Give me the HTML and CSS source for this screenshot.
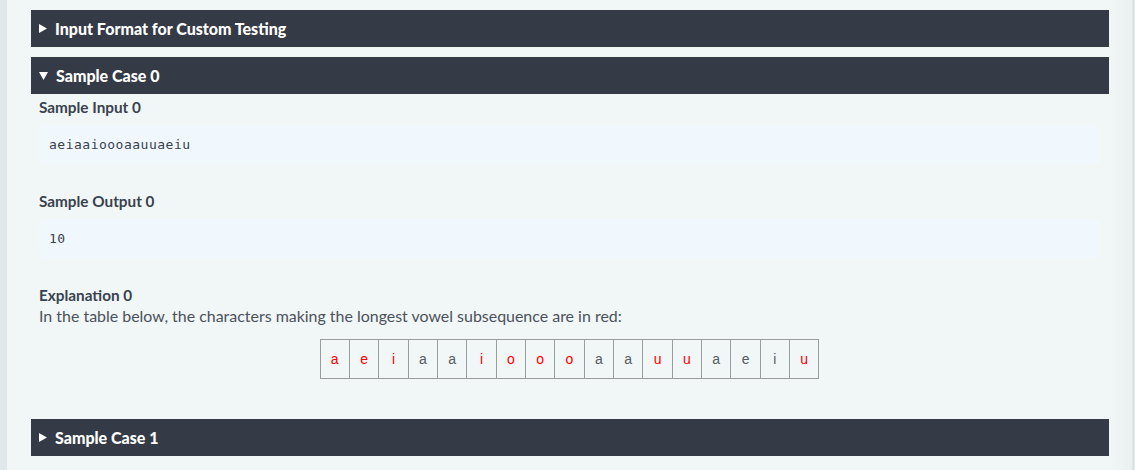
FILE: index.html
```html
<!DOCTYPE html>
<html>
<head>
<meta charset="utf-8">
<link rel="stylesheet" href="styles.css">
</head>
<body>
<div class="page">
  <div class="left-strip"></div>
  <main class="main">
    <section class="section">
      <div class="bar"><svg class="arrow" width="8" height="9" viewBox="0 0 8 9"><path d="M0 0 L8 4.5 L0 9 Z" fill="#fff"/></svg>Input Format for Custom Testing</div>
    </section>
    <section class="section">
      <div class="bar"><svg class="arrow" width="9" height="8" viewBox="0 0 9 8"><path d="M0 0 L9 0 L4.5 8 Z" fill="#fff"/></svg>Sample Case 0</div>
      <div class="content">
        <h4 class="label">Sample Input 0</h4>
        <pre class="code">aeiaaioooaauuaeiu</pre>
        <h4 class="label">Sample Output 0</h4>
        <pre class="code">10</pre>
        <h4 class="label label-expl">Explanation 0</h4>
        <p class="text">In the table below, the characters making the longest vowel subsequence are in red:</p>
        <div class="table-wrap">
          <table class="chars">
            <tr>
              <td class="r">a</td><td class="r">e</td><td class="r">i</td><td>a</td><td>a</td><td class="r">i</td><td class="r">o</td><td class="r">o</td><td class="r">o</td><td>a</td><td>a</td><td class="r">u</td><td class="r">u</td><td>a</td><td>e</td><td>i</td><td class="r">u</td>
            </tr>
          </table>
        </div>
      </div>
    </section>
    <section class="section">
      <div class="bar"><svg class="arrow" width="8" height="9" viewBox="0 0 8 9"><path d="M0 0 L8 4.5 L0 9 Z" fill="#fff"/></svg>Sample Case 1</div>
    </section>
  </main>
  <div class="right-strip"></div>
</div>
</body>
</html>
```
FILE: styles.css
```css
html, body {
  margin: 0;
  padding: 0;
  background: #f1f6f6;
}
body {
  font-family: Lato, "Noto Sans", sans-serif;
  color: #39424e;
}
.page {
  display: flex;
  width: 1135px;
  height: 470px;
  overflow: hidden;
}
.left-strip {
  width: 7px;
  flex: none;
  background: #e0e8ea;
}
.main {
  flex: 1;
  padding: 10px 0 0 24px;
  min-width: 0;
}
.right-strip {
  width: 26px;
  flex: none;
  background: linear-gradient(to right, #f1f6f6 0%, #eaf0f0 88%, #d8dfe1 92%, #d8dfe1 96%, #f1f6f6 100%);
}
.section {
  margin-bottom: 10px;
}
.bar {
  height: 37px;
  background: #343a46;
  color: #fff;
  font-weight: 900;
  font-size: 16px;
  display: flex;
  align-items: center;
  padding-left: 8px;
}
.arrow {
  margin-right: 8px;
  flex: none;
}
.content {
  padding: 0 9px 0 8px;
}
.label {
  margin: 0;
  font-size: 15.3px;
  font-weight: 700;
  color: #39424e;
  line-height: 20px;
  padding-top: 3px;
}
.code {
  margin: 8px 0 24px 0;
  background: #f0f7fd;
  border-radius: 4px;
  height: 39px;
  box-sizing: border-box;
  padding: 12px 10px 0 10px;
  font-family: "DejaVu Sans Mono", monospace;
  font-size: 13px;
  letter-spacing: 0.5px;
  line-height: 16px;
  color: #39424e;
}
.label-expl {
  padding-top: 3px;
}
.text {
  margin: 0;
  font-size: 15.95px;
  line-height: 21px;
  color: #4b525c;
}
.table-wrap {
  display: flex;
  justify-content: center;
  padding-top: 13px;
  padding-bottom: 30px;
}
.chars {
  border-collapse: collapse;
}
.chars td {
  border: 1px solid #9a9c9e;
  width: 28.35px;
  height: 38px;
  padding: 0;
  text-align: center;
  font-family: "Liberation Sans", Arial, sans-serif;
  font-size: 14px;
  color: #555b62;
}
.chars td.r {
  color: #ff0000;
}
```
